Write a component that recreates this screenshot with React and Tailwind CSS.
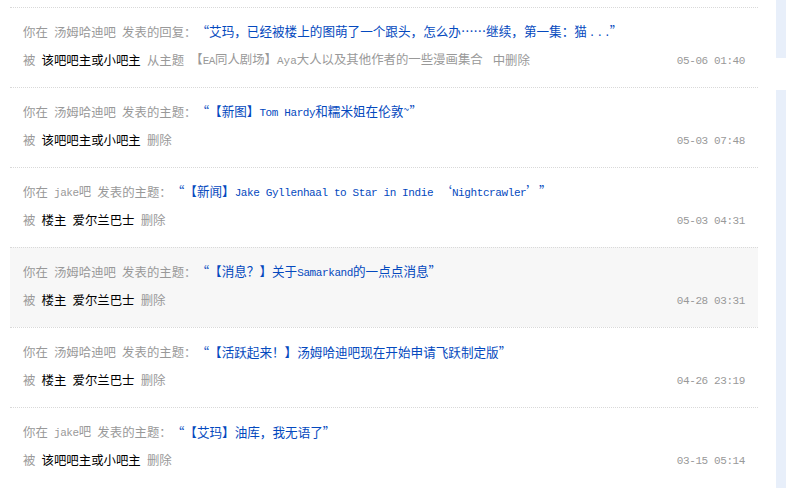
import React from "react";

const L = ({ children, className = "" }) => (
  <span
    className={`font-['Liberation_Mono','Noto_Sans_CJK_SC',monospace] text-[11px] tracking-[-0.4px] ${className}`}
  >
    {children}
  </span>
);

const OQ = ({ c = "“" }) => (
  <span className="inline-block w-[12.6px] text-right">{c}</span>
);
const CQ = ({ c = "”" }) => (
  <span className="inline-block w-[12.6px] text-left">{c}</span>
);
const F = ({ c }) => (
  <span className="inline-block w-[12.6px] text-center">{c}</span>
);
const S = () => <span className="inline-block w-[6.2px]" />;

const items = [
  {
    bar: "汤姆哈迪吧",
    kind: "发表的回复：",
    title: (
      <>
        <OQ />艾玛，已经被楼上的图萌了一个跟头，怎么办
        <F c="…" />
        <F c="…" />
        继续，第一集：猫
        <span className="inline-block w-[23px] pl-[2px] font-['Liberation_Mono',monospace] text-[11px] tracking-[1px]">
          ...
        </span>
        <CQ />
      </>
    ),
    who: ["该吧吧主或小吧主"],
    from: (
      <>
        【<L>EA</L>同人剧场】<L className="tracking-[0px]">Aya</L>
        大人以及其他作者的一些漫画集合
      </>
    ),
    date: "05-06 01:40",
  },
  {
    bar: "汤姆哈迪吧",
    kind: "发表的主题：",
    title: (
      <>
        <OQ />【新图】<L>Tom Hardy</L>和糯米姐在伦敦
        <span className="inline-block w-[6.2px] text-[10px] -translate-y-[3px]">~</span>
        <CQ />
      </>
    ),
    who: ["该吧吧主或小吧主"],
    date: "05-03 07:48",
  },
  {
    bar: "jake",
    barLatin: true,
    kind: "发表的主题：",
    title: (
      <>
        <OQ />【新闻】<L>Jake Gyllenhaal to Star in Indie </L>
        <OQ c="‘" />
        <L>Nightcrawler</L>
        <CQ c="’" />
        <CQ />
      </>
    ),
    who: ["楼主", "爱尔兰巴士"],
    date: "05-03 04:31",
  },
  {
    bar: "汤姆哈迪吧",
    kind: "发表的主题：",
    title: (
      <>
        <OQ />【消息？】关于<L>Samarkand</L>的一点点消息
        <CQ />
      </>
    ),
    who: ["楼主", "爱尔兰巴士"],
    date: "04-28 03:31",
    hl: true,
  },
  {
    bar: "汤姆哈迪吧",
    kind: "发表的主题：",
    title: (
      <>
        <OQ />【活跃起来！】汤姆哈迪吧现在开始申请飞跃制定版
        <CQ />
      </>
    ),
    who: ["楼主", "爱尔兰巴士"],
    date: "04-26 23:19",
  },
  {
    bar: "jake",
    barLatin: true,
    kind: "发表的主题：",
    title: (
      <>
        <OQ />【艾玛】油库，我无语了
        <CQ />
      </>
    ),
    who: ["该吧吧主或小吧主"],
    date: "03-15 05:14",
  },
];

function Item({ it }) {
  return (
    <div
      className={`border-t border-dotted border-[#d9d9d9] pl-[13px] pr-[13px] pt-[14px] pb-[17px] ${
        it.hl ? "bg-[#f7f7f7]" : ""
      }`}
    >
      <div className="h-[20px] leading-[20px] whitespace-nowrap flex items-center">
        <span className="text-[#999]">你在</span>
        <S />
        <span className="text-[#999]">
          {it.barLatin ? (
            <>
              <L>{it.bar}</L>吧
            </>
          ) : (
            it.bar
          )}
        </span>
        <S />
        <span className="text-[#999]">{it.kind}</span>
        <span className="text-[#0449be] text-[12.6px]">{it.title}</span>
      </div>
      <div className="mt-[8px] h-[20px] leading-[20px] whitespace-nowrap flex items-center">
        <span className="text-[#999]">被</span>
        {it.who.map((w, i) => (
          <React.Fragment key={i}>
            <S />
            <span className="text-[#000]">{w}</span>
          </React.Fragment>
        ))}
        <S />
        {it.from ? (
          <>
            <span className="text-[#999]">从主题</span>
            <S />
            <span className="text-[#999]">{it.from}</span>
            <span className="text-[#999] ml-[10px]">中删除</span>
          </>
        ) : (
          <span className="text-[#999]">删除</span>
        )}
        <span className="ml-auto text-[#999]">
          <L>{it.date}</L>
        </span>
      </div>
    </div>
  );
}

export default function App() {
  return (
    <div className="w-[786px] h-[488px] overflow-hidden bg-white flex font-['Noto_Sans_CJK_SC','Liberation_Sans',sans-serif] text-[12.4px]">
      <div className="w-[758px] pl-[10px] pt-[7px] shrink-0">
        {items.map((it, i) => (
          <Item key={i} it={it} />
        ))}
      </div>
      <div className="ml-[18px] w-[10px] flex flex-col">
        <div className="h-[58px] bg-[#e8effa]" />
        <div className="mt-[32px] flex-1 bg-[#e8effa]" />
      </div>
    </div>
  );
}
